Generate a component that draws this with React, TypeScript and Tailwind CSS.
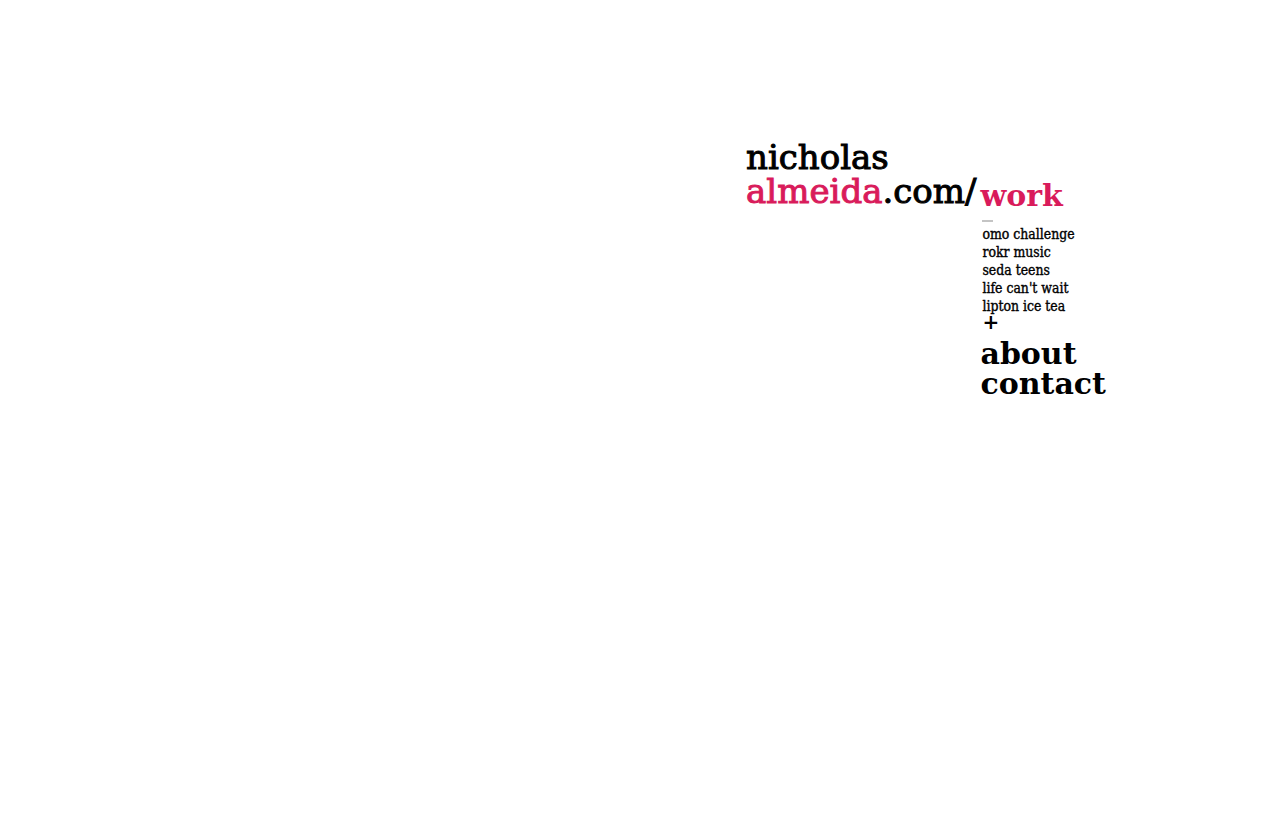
const projects = ['omo challenge', 'rokr music', 'seda teens', "life can't wait", 'lipton ice tea'];

export default function App() {
  return (
    <div className="min-h-[821px] bg-white text-black font-['DejaVu_Serif',serif]">
      <div className="pl-[746px] pt-[140px]">
        <div className="text-[34px] leading-[34px] [-webkit-text-stroke:1px_currentColor]">nicholas</div>
        <div className="flex items-start">
          <div className="text-[34px] leading-[34px] [-webkit-text-stroke:1px_currentColor]">
            <span className="text-[#d91b5b]">almeida</span>.com/
          </div>
          <div className="pl-[4px] pt-[5px]">
            <div className="text-[30px] leading-[34px] font-bold text-[#d91b5b]">work</div>
            <div className="ml-[2px] mt-[7px] h-[2px] w-[11px] bg-[#c4c4c4]" />
            <ul className="ml-[2px] mt-[3px] font-['DejaVu_Serif_Condensed','DejaVu_Serif',serif] text-[13.9px] leading-[18px] [-webkit-text-stroke:0.35px_currentColor]">
              {projects.map((p) => (
                <li key={p}>{p}</li>
              ))}
            </ul>
            <div className="ml-[2px] text-[20px] leading-[14px] font-bold">+</div>
            <div className="mt-[10px] text-[30px] leading-[30px] font-bold">about</div>
            <div className="text-[30px] leading-[30px] font-bold">contact</div>
          </div>
        </div>
      </div>
    </div>
  );
}
